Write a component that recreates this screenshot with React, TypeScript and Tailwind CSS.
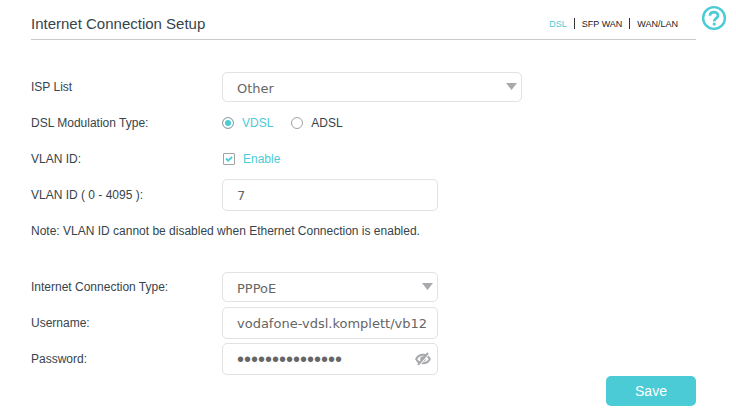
import { useState } from 'react';
import type { ReactNode } from 'react';

const field =
  'rounded-[5px] border border-[#e2e2e2] bg-white pl-[14px] font-["DejaVu_Sans",sans-serif] text-[13px] text-[#666] outline-none';

function Row({ label, htmlFor, children }: { label: string; htmlFor?: string; children: ReactNode }) {
  return (
    <div className="flex h-9 items-center">
      <label htmlFor={htmlFor} className="w-[191px] shrink-0">{label}</label>
      {children}
    </div>
  );
}

function Select({ id, value, width }: { id: string; value: string; width: string }) {
  return (
    <div className={`relative ${width}`}>
      <select id={id} defaultValue={value} className={`${field} block h-[30px] w-full appearance-none pr-8 pt-1`}>
        <option>{value}</option>
      </select>
      <svg viewBox="0 0 11 7" className="pointer-events-none absolute right-[5px] top-[11px] h-[7px] w-[11px]">
        <path d="M0 0h11L5.5 7z" fill="#a7a9ac" />
      </svg>
    </div>
  );
}

export default function App() {
  const [mode, setMode] = useState('VDSL');
  return (
    <main className='bg-white pl-[31px] pr-2 font-["Liberation_Sans",Arial,sans-serif] text-xs text-[#36444b]'>
      <header className="flex pt-1">
        <div className="flex h-9 flex-1 items-center justify-between border-b border-[#c8cacb] pt-1">
          <h1 className="text-[15px]">Internet Connection Setup</h1>
          <nav className="flex items-center gap-[7px] pr-[18px] text-[9px] text-[#222]">
            <a href="#dsl" className="text-[#4acbd6]">DSL</a>
            <span className="h-[11px] w-px bg-[#333]" />
            <a href="#sfp">SFP WAN</a>
            <span className="h-[11px] w-px bg-[#333]" />
            <a href="#wan">WAN/LAN</a>
          </nav>
        </div>
        <button aria-label="Help" className="ml-[5px] h-7 w-[27px]">
          <svg viewBox="0 0 27 28" className="h-7 w-[27px]" fill="none" stroke="#4acbd6">
            <circle cx="13" cy="14" r="10.9" strokeWidth="2.4" />
            <path d="M9 11.8c0-2.3 1.8-3.6 4-3.6s4 1.3 4 3.4c0 2.8-3.8 2.8-3.8 5.8" strokeWidth="2.7" />
            <path d="M13.2 18.8v2.7" strokeWidth="2.8" />
          </svg>
        </button>
      </header>
      <form className="pr-8 pt-[29px]" onSubmit={(e) => e.preventDefault()}>
        <Row label="ISP List" htmlFor="isp"><Select id="isp" value="Other" width="w-[300px]" /></Row>
        <Row label="DSL Modulation Type:">
          <div className="flex gap-[18px]">
            {['VDSL', 'ADSL'].map((m) => (
              <label key={m} className={`flex items-center gap-2 ${mode === m ? 'text-[#4acbd6]' : ''}`}>
                <input type="radio" name="mode" checked={mode === m} onChange={() => setMode(m)}
                  className="size-3 appearance-none rounded-full border border-[#a0a2a5] bg-white checked:bg-[#4acbd6] checked:shadow-[inset_0_0_0_2px_white]" />
                {m}
              </label>
            ))}
          </div>
        </Row>
        <Row label="VLAN ID:">
          <label className="flex items-center gap-2 pl-px text-[#4acbd6]">
            <span className="relative size-3">
              <input type="checkbox" defaultChecked className="peer block size-3 appearance-none rounded-[1px] border border-[#a0a2a5]" />
              <svg viewBox="0 0 12 12" className="pointer-events-none absolute inset-0 hidden size-3 peer-checked:block">
                <path d="M3 5.5l2.2 2.2L9 3.8" fill="none" stroke="#4acbd6" strokeWidth="1.8" />
              </svg>
            </span>
            Enable
          </label>
        </Row>
        <Row label="VLAN ID ( 0 - 4095 ):" htmlFor="vlan">
          <input id="vlan" defaultValue="7" className={`${field} h-8 w-[216px] pr-1`} />
        </Row>
        <p className="flex h-9 items-center">Note: VLAN ID cannot be disabled when Ethernet Connection is enabled.</p>
        <div className="pt-5">
          <Row label="Internet Connection Type:" htmlFor="type"><Select id="type" value="PPPoE" width="w-[216px]" /></Row>
          <Row label="Username:" htmlFor="user">
            <input id="user" defaultValue="vodafone-vdsl.komplett/vb12" className={`${field} h-8 w-[216px] pr-1`} />
          </Row>
          <Row label="Password:" htmlFor="pass">
            <div className="relative">
              <input id="pass" type="password" defaultValue="passwordpasswor"
                className='block h-8 w-[216px] rounded-[5px] border border-[#e2e2e2] bg-white pl-[14px] pr-8 font-["Liberation_Sans",Arial,sans-serif] text-xl text-[#666] outline-none' />
              <button type="button" aria-label="Show password" className="absolute right-[7px] top-[9px]">
                <svg viewBox="0 0 16 14" className="h-3.5 w-4" fill="none" stroke="#a7a9ac">
                  <path d="M1.2 7C4 1.2 12 1.2 14.8 7C12 12.8 4 12.8 1.2 7z" strokeWidth="2" />
                  <circle cx="8" cy="7" r="2.8" fill="#a7a9ac" stroke="none" />
                  <path d="M4.4 13.4L14 1.8" stroke="#fff" strokeWidth="1.2" />
                  <path d="M3 12.9L13 1" strokeWidth="2" />
                </svg>
              </button>
            </div>
          </Row>
        </div>
        <div className="-mt-px flex justify-end">
          <button type="submit" className="h-[30px] w-[90px] rounded-[5px] bg-[#4acbd6] text-sm text-white">Save</button>
        </div>
      </form>
    </main>
  );
}
